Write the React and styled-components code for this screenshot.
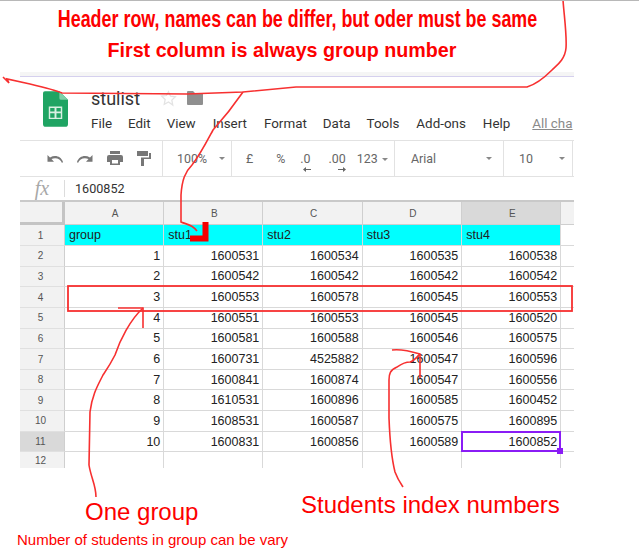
import React from "react";
import styled, { createGlobalStyle } from "styled-components";

const GlobalStyle = createGlobalStyle`
  html, body {
    margin: 0;
    padding: 0;
    background: #fff;
    font-family: "Roboto", "Liberation Sans", sans-serif;
  }
`;

const Page = styled.div`
  position: relative;
  width: 639px;
  height: 558px;
  overflow: hidden;
  background: #fff;
  border-top: 1px solid #b8b8b8;
  box-sizing: border-box;
`;

const Notes = styled.div`
  height: 71px;
  box-sizing: border-box;
  padding-top: 5px;
  text-align: center;
  color: #fd0000;
  font-family: "Liberation Sans", Arial, sans-serif;
  font-weight: 700;
  white-space: nowrap;
`;

const MainNote = styled.div`
  font-size: 23.7px;
  line-height: 26px;
  margin-left: -44px;
  transform: scaleX(0.755);
`;

const SubNote = styled.div`
  font-size: 19.7px;
  line-height: 22px;
  margin: 7px 0 0 -75px;
`;

const Sheet = styled.div`
  width: 554px;
  margin-left: 20px;
`;

const TopStrip = styled.div`
  height: 4px;
  background: #f5f5f5;
  border-bottom: 1px solid #d5d0ee;
`;

const TitleBar = styled.div`
  display: flex;
  height: 64px;
  box-sizing: border-box;
  padding: 14px 0 0 23px;
  border-bottom: 1px solid #e2e2e2;
`;

const DocText = styled.div`
  margin: -4px 0 0 23px;
  min-width: 0;
  flex: 1;
`;

const DocRow = styled.div`
  display: flex;
  align-items: center;
  gap: 10px;
  height: 22px;
`;

const DocTitle = styled.div`
  font-size: 18px;
  color: #333;
  margin-right: 10px;
`;

const MenuRow = styled.div`
  display: flex;
  align-items: center;
  height: 26px;
  margin-top: 1px;
  font-size: 13.4px;
  color: #333;
  white-space: nowrap;
`;

const MenuItem = styled.span`
  margin-right: ${(p) => p.$gap}px;
`;

const AllChanges = styled.span`
  color: #8a8a8a;
  text-decoration: underline;
`;

const Toolbar = styled.div`
  display: flex;
  align-items: center;
  height: 36px;
  box-sizing: border-box;
  border-bottom: 1px solid #e2e2e2;
  color: #666;
  font-size: 12.4px;
`;

const ToolGroup = styled.div`
  display: flex;
  align-items: center;
  gap: ${(p) => p.$gap || 0}px;
  width: ${(p) => p.$width}px;
  height: 35px;
  box-sizing: border-box;
  padding-left: ${(p) => p.$pad || 0}px;
  border-right: 1px solid #e2e2e2;
  flex: none;
`;

const ToolText = styled.span`
  position: relative;
  margin-left: ${(p) => p.$left || 0}px;
`;

const Caret = styled.span`
  display: inline-block;
  width: 0;
  height: 0;
  vertical-align: middle;
  border-left: 3px solid transparent;
  border-right: 3px solid transparent;
  border-top: 3px solid #888;
  margin-left: ${(p) => p.$gap || 0}px;
`;

const DecimalArrow = styled.svg`
  position: absolute;
  right: 0;
  bottom: -6px;
`;

const FormulaBar = styled.div`
  display: flex;
  align-items: center;
  height: 25px;
  box-sizing: border-box;
  border-bottom: 2px solid #c9c9c9;
  font-size: 12.6px;
  color: #333;
`;

const Fx = styled.div`
  width: 44px;
  text-align: center;
  font-family: "Liberation Serif", serif;
  font-style: italic;
  font-size: 20px;
  color: #a8a8a8;
  border-right: 1px solid #dcdcdc;
  line-height: 17px;
  margin-right: 10px;
`;

const Grid = styled.div`
  display: grid;
  grid-template-columns: 45px 99.3px 99px 99.4px 99.6px 99px 12.7px;
  grid-template-rows: 23px 21px repeat(10, 20.65px) 16px;
  font-family: "Liberation Sans", Arial, sans-serif;
  font-size: 12.5px;
  color: #222;
`;

const Corner = styled.div`
  background: #f2f2f2;
  border-right: 3px solid #c4c4c4;
  border-bottom: 3px solid #c4c4c4;
  box-sizing: border-box;
`;

const ColHead = styled.div`
  display: flex;
  align-items: center;
  justify-content: center;
  box-sizing: border-box;
  padding-left: 2px;
  font-size: 10px;
  color: #555;
  background: ${(p) => (p.$active ? "#d9d9d9" : "#f2f2f2")};
  border-right: ${(p) => (p.$last ? "none" : "1px solid #cfcfcf")};
  border-bottom: 1px solid #cfcfcf;
`;

const RowHead = styled.div`
  display: flex;
  align-items: center;
  justify-content: center;
  box-sizing: border-box;
  padding-right: 3px;
  font-size: 10px;
  color: #555;
  background: ${(p) => (p.$active ? "#d9d9d9" : "#f2f2f2")};
  border-right: 1px solid #cfcfcf;
  border-bottom: ${(p) => (p.$open ? "none" : "1px solid #e0e0e0")};
`;

const Cell = styled.div`
  position: relative;
  display: flex;
  align-items: center;
  justify-content: ${(p) => (p.$text ? "flex-start" : "flex-end")};
  box-sizing: border-box;
  padding: 0 3px 0 4px;
  background: ${(p) => (p.$header ? "#00ffff" : "#fff")};
  border-right: 1px solid #d9d9d9;
  border-bottom: ${(p) => (p.$open ? "none" : "1px solid #d9d9d9")};
`;

const FillerCell = styled.div`
  border-bottom: ${(p) => (p.$open ? "none" : "1px solid #d9d9d9")};
  background: #fff;
`;

const Selection = styled.div`
  position: absolute;
  inset: -1px;
  z-index: 1;
  border: 2px solid #8a1cf5;
  pointer-events: none;
`;

const Handle = styled.div`
  position: absolute;
  right: -4px;
  bottom: -4px;
  width: 6px;
  height: 6px;
  background: #8a1cf5;
`;

const Footnotes = styled.div`
  color: #fd0000;
  font-family: "Liberation Sans", Arial, sans-serif;
`;

const Labels = styled.div`
  display: flex;
  align-items: flex-start;
  height: 56px;
  padding: 23px 0 0 85px;
`;

const GroupLabel = styled.div`
  font-size: 24px;
  line-height: 28px;
  margin-top: 7px;
  width: 216px;
`;

const StudentsLabel = styled.div`
  font-size: 24px;
  line-height: 28px;
`;

const VaryNote = styled.div`
  margin-left: 17px;
  margin-top: -16px;
  font-size: 15px;
  line-height: 18px;
`;

const Scribble = styled.svg`
  position: absolute;
  left: 0;
  top: -1px;
  pointer-events: none;
`;

const rows = [
  [1, 1600531, 1600534, 1600535, 1600538],
  [2, 1600542, 1600542, 1600542, 1600542],
  [3, 1600553, 1600578, 1600545, 1600553],
  [4, 1600551, 1600553, 1600545, 1600520],
  [5, 1600581, 1600588, 1600546, 1600575],
  [6, 1600731, 4525882, 1600547, 1600596],
  [7, 1600841, 1600874, 1600547, 1600556],
  [8, 1610531, 1600896, 1600585, 1600452],
  [9, 1608531, 1600587, 1600575, 1600895],
  [10, 1600831, 1600856, 1600589, 1600852],
];

const menu = [
  ["File", 16],
  ["Edit", 16],
  ["View", 17],
  ["Insert", 17],
  ["Format", 16],
  ["Data", 16],
  ["Tools", 17],
  ["Add-ons", 17],
  ["Help", 22],
];

function SheetsLogo() {
  return (
    <svg width="25" height="36" viewBox="0 0 26 37">
      <path d="M2 0H17L26 9V34a3 3 0 0 1-3 3H3a3 3 0 0 1-3-3V2a2 2 0 0 1 2-2Z" fill="#1fa463" />
      <path d="M17 0L26 9H19a2 2 0 0 1-2-2Z" fill="#7fd0a8" />
      <path d="M6 16H20V29H6ZM7.5 17.5V21H12V17.5ZM14 17.5V21H18.5V17.5ZM7.5 23V27.5H12V23ZM14 23V27.5H18.5V23Z" fill="#d8f0e2" fillRule="evenodd" />
    </svg>
  );
}

function Star() {
  return (
    <svg width="17" height="17" viewBox="0 0 24 24" fill="none" stroke="#e3e3e3" strokeWidth="1.8">
      <path d="M12 2.5l2.9 6.3 6.8.8-5 4.7 1.3 6.8L12 16.8 6 20.1l1.3-6.8-5-4.7 6.8-.8Z" />
    </svg>
  );
}

function Folder() {
  return (
    <svg width="16" height="14" viewBox="0 0 16 14">
      <path d="M1 0H6L8 2H15a1 1 0 0 1 1 1V13a1 1 0 0 1-1 1H1a1 1 0 0 1-1-1V1a1 1 0 0 1 1-1Z" fill="#8f8f8f" />
    </svg>
  );
}

function Undo({ flip }) {
  return (
    <svg width="16" height="10" viewBox="0 0 16 10" style={flip ? { transform: "scaleX(-1)" } : undefined}>
      <path d="M15 9C13.5 5 9 3 4.5 5L7 7.8H0.5V1L3 3.5C8.5 0.5 14 2.5 16 8Z" fill="#777" />
    </svg>
  );
}

function Printer() {
  return (
    <svg width="16" height="15" viewBox="0 0 16 15">
      <path d="M3 0H13V3H3ZM2 4H14a2 2 0 0 1 2 2V11H13V14H3V11H0V6a2 2 0 0 1 2-2ZM5 9V12.5H11V9Z" fill="#777" fillRule="evenodd" />
    </svg>
  );
}

function PaintRoller() {
  return (
    <svg width="14" height="15" viewBox="0 0 14 15">
      <path d="M0 0H11V5H0ZM12 2H14V8H7V15H4V6.5H12Z" fill="#777" />
    </svg>
  );
}

function Arrow({ left }) {
  return (
    <DecimalArrow width="8" height="5" viewBox="0 0 8 5" style={left ? undefined : { transform: "scaleX(-1)" }}>
      <path d="M0 2.5L3 0V2H8V3H3V5Z" fill="#666" />
    </DecimalArrow>
  );
}

export default function App() {
  return (
    <Page>
      <GlobalStyle />
      <Notes>
        <MainNote>Header row, names can be differ, but oder must be same</MainNote>
        <SubNote>First column is always group number</SubNote>
      </Notes>
      <Sheet>
        <TopStrip />
        <TitleBar>
          <SheetsLogo />
          <DocText>
            <DocRow>
              <DocTitle>stulist</DocTitle>
              <Star />
              <Folder />
            </DocRow>
            <MenuRow>
              {menu.map(([label, gap]) => (
                <MenuItem key={label} $gap={gap}>{label}</MenuItem>
              ))}
              <AllChanges>All cha</AllChanges>
            </MenuRow>
          </DocText>
        </TitleBar>
        <Toolbar>
          <ToolGroup $width={143} $pad={27} $gap={14}>
            <Undo />
            <Undo flip />
            <Printer />
            <PaintRoller />
          </ToolGroup>
          <ToolGroup $width={69} $pad={14}>
            100%
            <Caret $gap={12} />
          </ToolGroup>
          <ToolGroup $width={163} $pad={14}>
            <ToolText>£</ToolText>
            <ToolText $left={23}>%</ToolText>
            <ToolText $left={15}>.0<Arrow left /></ToolText>
            <ToolText $left={18}>.00<Arrow /></ToolText>
            <ToolText $left={11}>123<Caret $gap={4} /></ToolText>
          </ToolGroup>
          <ToolGroup $width={109} $pad={16}>
            Arial
            <Caret $gap={50} />
          </ToolGroup>
          <ToolGroup $width={69} $pad={15}>
            10
            <Caret $gap={26} />
          </ToolGroup>
        </Toolbar>
        <FormulaBar>
          <Fx>fx</Fx>
          1600852
        </FormulaBar>
        <Grid>
          <Corner />
          {["A", "B", "C", "D", "E"].map((c) => (
            <ColHead key={c} $active={c === "E"}>{c}</ColHead>
          ))}
          <ColHead $last />
          <RowHead>1</RowHead>
          {["group", "stu1", "stu2", "stu3", "stu4"].map((t) => (
            <Cell key={t} $header $text>{t}</Cell>
          ))}
          <FillerCell />
          {rows.map((row, i) => (
            <React.Fragment key={row[0]}>
              <RowHead $active={i === 9}>{i + 2}</RowHead>
              {row.map((v, j) => (
                <Cell key={j}>
                  {v}
                  {i === 9 && j === 4 && (
                    <Selection>
                      <Handle />
                    </Selection>
                  )}
                </Cell>
              ))}
              <FillerCell />
            </React.Fragment>
          ))}
          <RowHead $open>12</RowHead>
          {[0, 1, 2, 3, 4].map((k) => (
            <Cell key={k} $open />
          ))}
          <FillerCell $open />
        </Grid>
      </Sheet>
      <Footnotes>
        <Labels>
          <GroupLabel>One group</GroupLabel>
          <StudentsLabel>Students index numbers</StudentsLabel>
        </Labels>
        <VaryNote>Number of students in group can be vary</VaryNote>
      </Footnotes>
      <Scribble width="639" height="558" viewBox="0 0 639 558" fill="none" stroke="#f73030" strokeWidth="1.6">
        <path d="M563 0C564 15 567 35 566 48C565 60 556 66 552 70C544 78 537 84 527 87L296 87L243 92L187 94L62 93C55 90 47 88 30 84L7 79L9 83L3 77" />
        <path d="M243 92C232 108 222 120 213 130C205 145 200 155 192 165C185 172 182 180 181 195L181 222C185 224 192 224 197 231" />
        <path d="M190 238.5H205.5V222" stroke="#f50000" strokeWidth="6" />
        <rect x="68" y="286" width="504" height="25" strokeWidth="1.8" />
        <path d="M118 308H143V328" strokeWidth="1.6" />
        <path d="M143 308C130 320 120 340 115 355C110 365 105 372 103 375C98 385 92 395 90 412L89 465C91 478 96 485 96 497" />
        <path d="M392 350C400 349 410 351 420 354V378" />
        <path d="M420 354C416 358 414 361 410 362C404 362 400 365 397 367C390 370 389 374 389 380L389 418C390 445 392 460 395 472C398 480 401 484 403 487" />
      </Scribble>
    </Page>
  );
}
